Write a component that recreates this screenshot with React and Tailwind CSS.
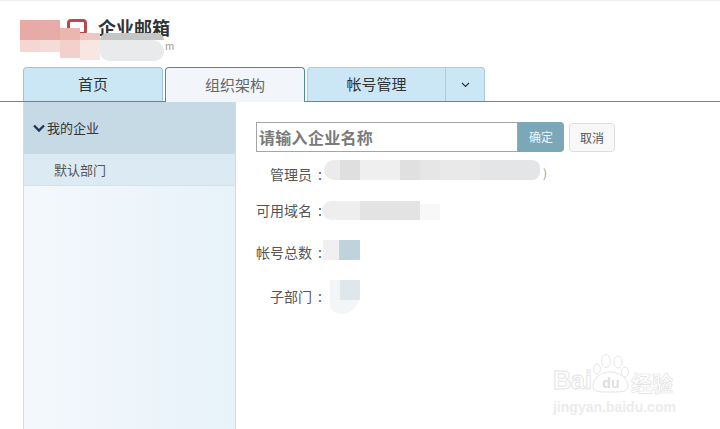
const font = { fontFamily: '"Noto Sans CJK SC", "Liberation Sans", sans-serif' };
const latin = { fontFamily: '"Liberation Sans", sans-serif' };

function Row({ label, className, stripClass, children }) {
  return (
    <div className={`flex items-center h-5 text-[14px] text-[#555] ${className}`}>
      <span className="w-[56px] text-right whitespace-nowrap">{label}</span>
      <span className="w-[10px] text-right">:</span>
      <div className={`flex shrink-0 ${stripClass}`}>{children}</div>
    </div>
  );
}

export default function App() {
  return (
    <div style={font} className="relative w-[720px] h-[429px] overflow-hidden bg-white">
      <div className="h-[1px] bg-[#eeeeee]" />

      {/* header */}
      <header className="relative h-[66px] flex items-start pl-[67px] pt-[18px]">
        <div className="w-[20px] h-[16px] rounded-[4px] border-[3px] border-[#b9484c]" />
        <span className="ml-[11px] -mt-[4px] text-[18px] leading-6 font-bold text-[#333]">企业邮箱</span>
        <span className="ml-[-5px] mt-[22px] text-[10px] leading-[10px] text-[#999]">m</span>
        {/* mosaic laid over the logo */}
        <div className="absolute left-[20px] top-[19px] flex items-start">
          <div className="flex flex-col w-[20px]">
            <div className="h-[20px] bg-[#e8aaa6]" />
            <div className="h-[12px] bg-[#f4d7d3]" />
          </div>
          <div className="flex flex-col w-[20px]">
            <div className="h-[20px] bg-[#e8aca8]" />
            <div className="h-[12px] bg-[#f6dcd8]" />
          </div>
          <div className="flex flex-col w-[20px] mt-[8px]">
            <div className="h-[12px] bg-[#ebb6b0]" />
            <div className="h-[18px] bg-[#f4d0cb]" />
          </div>
          <div className="flex flex-col w-[20px] mt-[13px]">
            <div className="h-[7px] bg-[#f0c6c0]" />
            <div className="h-[20px] bg-[#f8e6e2]" />
          </div>
          <div className="flex flex-col w-[64px] mt-[13px]">
            <div className="h-[7px] rounded-t-full bg-[#c4c6c6]" />
            <div className="h-[21px] rounded-b-[14px] rounded-r-[18px] bg-[#e9eaeb]" />
          </div>
        </div>
      </header>

      {/* tabs */}
      <nav className="flex h-[35px] pl-[23px] gap-[2px] text-[15px] border-b border-[#4f8db0]">
        <div className="w-[140px] h-[34px] flex items-center justify-center rounded-t bg-[#cbe7f5] border border-b-0 border-[#9cc5d9] text-[#333]">首页</div>
        <div className="relative z-10 w-[140px] h-[35px] flex items-center justify-center rounded-t bg-[#f2f6fb] border border-b-0 border-[#4d8aa8] text-[#666]">组织架构</div>
        <div className="flex h-[34px]">
          <div className="w-[139px] flex items-center justify-center rounded-tl bg-[#cbe7f5] border border-b-0 border-[#a9cfe0] text-[#333]">帐号管理</div>
          <div className="w-[39px] flex items-center justify-center rounded-tr bg-[#cbe7f5] border border-l-0 border-b-0 border-[#a9cfe0]">
            <svg width="9" height="6" viewBox="0 0 9 6" fill="none" stroke="#333" strokeWidth="1.2">
              <path d="M1 1l3.5 3.5L8 1" />
            </svg>
          </div>
        </div>
      </nav>

      {/* body */}
      <div className="flex h-[327px] pl-[23px]">
        <aside className="w-[213px] h-full shrink-0 border-x border-[#c4dfee] bg-gradient-to-r from-[#f4f8fc] to-[#e7f2f9]">
          <div className="h-[52px] flex items-center pl-[9px] gap-[2px] bg-[#c6dae6] text-[13px] text-[#333]">
            <svg width="12" height="9" viewBox="0 0 12 9" fill="none" stroke="#1e3a52" strokeWidth="2.4">
              <path d="M1 1.5l5 5 5-5" />
            </svg>
            我的企业
          </div>
          <div className="h-[32px] flex items-center pl-[30px] bg-[#dcebf3] border-b border-[#d3e3ec] text-[13px] text-[#555]">默认部门</div>
        </aside>

        <main className="pl-[20px] pt-[20px]">
          <div className="flex items-start">
            <div className="w-[262px] h-[30px] flex items-center pl-[2px] border border-[#a5a5a5] text-[16px] tracking-[0.3px] font-bold text-[#7a7a7a]">请输入企业名称</div>
            <button className="w-[46px] h-[30px] rounded-r bg-[#7ba8b9] text-[#eef5f8] text-[12px]">确定</button>
            <button className="ml-[5px] mt-[1px] w-[46px] h-[29px] rounded border border-[#dddddd] bg-[#f8f8f8] text-[#555] text-[12px]">取消</button>
          </div>

          <Row label="管理员" className="mt-[12px]" stripClass="ml-[2px] mb-[6px] items-start">
            <div className="w-[16px] h-5 rounded-l-full bg-[#ebebec]" />
            <div className="w-[20px] h-5 bg-[#dfdfdf]" />
            <div className="w-[40px] h-5 bg-[#efefef]" />
            <div className="w-[20px] h-5 bg-[#e0e0e0]" />
            <div className="w-[20px] h-5 bg-[#e6e6e6]" />
            <div className="w-[40px] h-5 bg-[#e9e9e9]" />
            <div className="w-[60px] h-5 rounded-r-lg bg-[#e4e5e6]" />
            <span className="ml-[3px] mt-[3px] text-[12px] leading-5 text-[#999]">)</span>
          </Row>
          <Row label="可用域名" className="mt-[16px]" stripClass="ml-[0px]">
            <div className="w-[38px] h-[19px] rounded-l-full bg-[#eeeeee]" />
            <div className="w-[60px] h-[19px] bg-[#e3e3e3]" />
            <div className="w-[20px] h-[16px] mt-[3px] bg-[#f8f8f8]" />
          </Row>
          <Row label="帐号总数" className="mt-[22px]" stripClass="ml-[1px] mb-[4px]">
            <div className="w-[16px] h-5 bg-[#f0f0f0]" />
            <div className="w-[21px] h-5 bg-[#bfd3dc]" />
          </Row>
          <Row label="子部门" className="mt-[24px]" stripClass="ml-[8px] mb-[12px]">
            <div className="w-[10px] h-[34px] -mb-[14px] rounded-bl-full bg-[#f3f6f6]" />
            <div className="w-[20px] h-[34px] -mb-[14px] rounded-br-full bg-[#f3f6f6]">
              <div className="h-5 bg-[#dde7ec]" />
            </div>
          </Row>
        </main>
      </div>

      {/* watermark lying over the page */}
      <div className="absolute left-[553px] top-[352px] w-[130px] flex flex-col opacity-80 pointer-events-none">
        <div className="flex items-end h-[42px]">
          <span style={latin} className="text-[25px] leading-7 font-bold text-white [-webkit-text-stroke:1px_#e0e0e0]">Bai</span>
          <div className="relative w-[40px] h-[40px] -ml-[1px] shrink-0">
            <svg width="40" height="40" viewBox="0 0 40 40" fill="none" stroke="#e0e0e0" strokeWidth="1">
              <ellipse cx="6" cy="15" rx="3.5" ry="5" />
              <ellipse cx="15" cy="7" rx="4.5" ry="6.5" />
              <ellipse cx="27" cy="8" rx="4" ry="6" />
              <ellipse cx="34" cy="18" rx="3.5" ry="5" />
              <path d="M2 32c0-8 8-14 17-14s18 6 18 14c0 6-6 6-18 6s-17 0-17-6z" />
            </svg>
            <span style={latin} className="absolute inset-x-0 bottom-[3px] text-center text-[14px] leading-4 font-bold text-[#d8d8d8]">du</span>
          </div>
          <span className="text-[21px] leading-6 font-bold text-white [-webkit-text-stroke:0.7px_#dcdcdc] whitespace-nowrap">经验</span>
        </div>
        <span style={latin} className="mt-[5px] text-[14px] leading-4 font-bold text-[#e8e8e8] whitespace-nowrap">jingyan.baidu.com</span>
      </div>
    </div>
  );
}
